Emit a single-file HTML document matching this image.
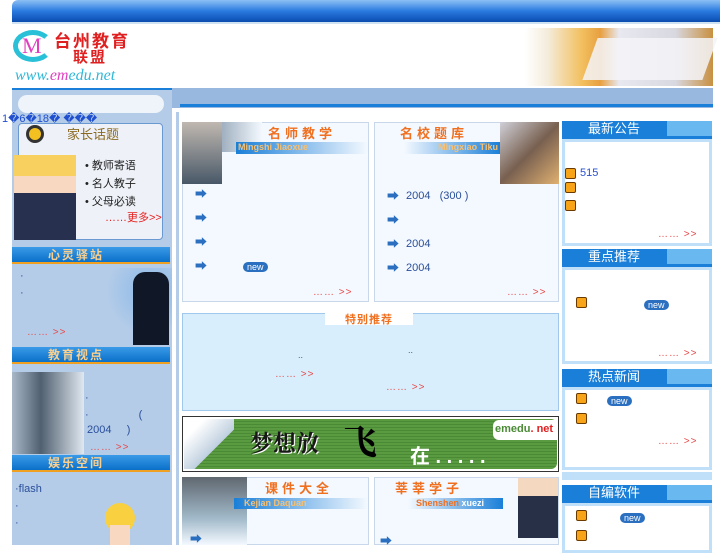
<!DOCTYPE html>
<html><head><meta charset="utf-8"><style>
*{margin:0;padding:0;box-sizing:border-box}
body{width:727px;height:545px;overflow:hidden;background:#fff;font-family:"Liberation Sans","Noto Sans CJK SC",sans-serif;font-size:11px;position:relative}
.a{position:absolute;white-space:nowrap}
.arrow{color:#2a6fc0;font-size:12px;font-weight:bold}
.more{color:#e84a4a;font-size:10px;letter-spacing:1px}
.blue{color:#2a4f9a;font-size:11px}
.sun{width:11px;height:11px;background:#f7a418;border:1px solid #6a3a00;border-radius:2px}
.new{background:#2a6fc0;color:#fff;font-size:9px;border-radius:6px;padding:0 4px;line-height:10px}
.rh{background:linear-gradient(90deg,#1a7fd8 70%,#6ab8f0 70%);color:#fff;font-size:13px;height:15px;line-height:15px;padding-left:26px;border-bottom:3px solid #1a7fd8;height:18px}
.rb{background:#fff;border:3px solid #bfe0f8}
.lbar{height:17px;background:linear-gradient(#3a9ae8,#0a70c8);border-bottom:2px solid #f0a020;color:#f9d090;font-weight:bold;font-size:12px;line-height:16px;padding-left:36px;letter-spacing:2px}
.panel{background:#f4f9ff;border:1px solid #c8d8ea}
</style></head><body>
<div class="a" style="left:12px;top:0;width:708px;height:22px;background:linear-gradient(#8cc0f4,#2a7ae0 50%,#0a4cb0);border-radius:6px 0 0 0"></div>
<div class="a" style="left:12px;top:22px;width:708px;height:2px;background:#cfe2f4"></div>
<div class="a" style="left:13px;top:30px;width:40px;height:32px;border-radius:50%;border:5px solid #2ac0d8;border-right-color:transparent"></div>
<div class="a" style="left:22px;top:33px;color:#e040c0;font-size:22px;font-family:'Liberation Serif',serif">M</div>
<div class="a" style="left:54px;top:27px;color:#e02020;font-size:17px;font-weight:bold;letter-spacing:2px">台州教育</div>
<div class="a" style="left:73px;top:46px;color:#e02020;font-size:15px;font-weight:bold;letter-spacing:2px">联盟</div>
<div class="a" style="left:15px;top:67px;color:#30b8d8;font-size:16px;font-style:italic;font-family:'Liberation Serif',serif">www.<span style="color:#e040c0">em</span>edu.net</div>
<div class="a" style="left:525px;top:28px;width:188px;height:58px;background:linear-gradient(90deg,#fff,#f4ecdc 12%,#f2c060 30%,#e8a040 40%,#e8e8f0 50%,#d8d8e0 80%,#c89040)"></div>
<div class="a" style="left:590px;top:38px;width:120px;height:42px;background:#f4f4f8;transform:skewX(-20deg);opacity:.85"></div>
<div class="a" style="left:12px;top:88px;width:701px;height:20px;background:#98b8e0"></div>
<div class="a" style="left:180px;top:104px;width:533px;height:3px;background:#1a7fd8"></div>
<div class="a" style="left:12px;top:88px;width:160px;height:457px;background:#b4cce8"></div>
<div class="a" style="left:12px;top:88px;width:160px;height:2px;background:#1a7fd8"></div>
<div class="a" style="left:18px;top:95px;width:146px;height:18px;background:#eef4fa;border-radius:9px"></div>
<div class="a" style="left:172px;top:108px;width:10px;height:437px;background:#fff"></div>
<div class="a" style="left:176px;top:112px;width:3px;height:433px;background:#b4cce8"></div>
<div class="a" style="left:2px;top:112px;color:#2050d0;font-size:11px">1�6�18� ���</div>
<div class="a" style="left:18px;top:123px;width:145px;height:117px;background:#eef2f8;border:1px solid #6a98d0;border-radius:4px"></div>
<div class="a" style="left:26px;top:125px;width:18px;height:18px;border-radius:50%;background:#f2c020;border:3px solid #333"></div>
<div class="a" style="left:67px;top:124px;font-size:13px;color:#8a6a20">家长话题</div>
<div class="a" style="left:14px;top:155px;width:62px;height:85px;background:linear-gradient(#f8d060 0,#f8d060 25%,#f8d8c0 25%,#f8d8c0 45%,#283050 45%)"></div>
<div class="a" style="left:85px;top:157px;font-size:11px;line-height:18px;color:#222">• 教师寄语<br>• 名人教子<br>• 父母必读</div>
<div class="a" style="left:105px;top:209px;font-size:11px;color:#e82020">……更多>></div>
<div class="a lbar" style="left:12px;top:247px;width:158px">心灵驿站</div>
<div class="a" style="left:100px;top:268px;width:72px;height:77px;background:radial-gradient(circle at 70% 30%,#8ab8e8,#b4cce8 60%)"></div>
<div class="a" style="left:133px;top:272px;width:36px;height:73px;background:#101828;border-radius:12px 12px 0 0"></div>
<div class="a" style="left:20px;top:268px;color:#2a4f9a;line-height:17px">·<br>·</div>
<div class="a more" style="left:27px;top:327px">…… >></div>
<div class="a lbar" style="left:12px;top:347px;width:158px">教育视点</div>
<div class="a" style="left:12px;top:372px;width:72px;height:82px;background:linear-gradient(90deg,#a8b8c8,#506070 40%,#e0e8f0)"></div>
<div class="a" style="left:85px;top:390px;color:#2a4f9a;line-height:17px">·<br>·<span style="margin-left:50px">(</span></div>
<div class="a blue" style="left:87px;top:424px">2004 &nbsp; &nbsp; )</div>
<div class="a more" style="left:90px;top:442px">…… >></div>
<div class="a lbar" style="left:12px;top:455px;width:158px">娱乐空间</div>
<div class="a" style="left:15px;top:481px;color:#2a4f9a;font-size:11px;line-height:17px">·flash<br>·<br>·</div>
<div class="a" style="left:105px;top:503px;width:30px;height:30px;border-radius:50%;background:#f8d040"></div>
<div class="a" style="left:110px;top:525px;width:20px;height:20px;background:#f8d8c0"></div>
<div class="a panel" style="left:182px;top:122px;width:187px;height:180px"></div>
<div class="a" style="left:182px;top:122px;width:40px;height:62px;background:linear-gradient(#c0b8b0,#485868)"></div>
<div class="a" style="left:222px;top:122px;width:40px;height:30px;background:linear-gradient(90deg,#a0b0c0,#f4f9ff)"></div>
<div class="a" style="left:268px;top:123px;color:#f07020;font-size:13px;font-weight:bold;letter-spacing:4px">名师教学</div>
<div class="a" style="left:236px;top:142px;width:132px;height:12px;background:linear-gradient(90deg,#1a7fd8,#f4f9ff);color:#f8c070;font-size:9px;font-weight:bold;padding-left:2px">Mingshi Jiaoxue</div>
<div class="a arrow" style="left:195px;top:185px">➡</div>
<div class="a arrow" style="left:195px;top:209px">➡</div>
<div class="a arrow" style="left:195px;top:233px">➡</div>
<div class="a arrow" style="left:195px;top:257px">➡</div>
<div class="a new" style="left:243px;top:262px">new</div>
<div class="a more" style="left:313px;top:287px">…… >></div>
<div class="a panel" style="left:374px;top:122px;width:185px;height:180px"></div>
<div class="a" style="left:400px;top:123px;color:#f07020;font-size:13px;font-weight:bold;letter-spacing:4px">名校题库</div>
<div class="a" style="left:404px;top:142px;width:96px;height:12px;background:linear-gradient(90deg,#f4f9ff,#1a7fd8);color:#f8c070;font-size:9px;font-weight:bold;text-align:right;padding-right:2px">Mingxiao Tiku</div>
<div class="a" style="left:500px;top:122px;width:59px;height:62px;background:linear-gradient(135deg,#d0d0d8,#786050 50%,#e0b070)"></div>
<div class="a arrow" style="left:387px;top:187px">➡</div><div class="a blue" style="left:406px;top:190px">2004 &nbsp; (300 )</div>
<div class="a arrow" style="left:387px;top:211px">➡</div>
<div class="a arrow" style="left:387px;top:235px">➡</div><div class="a blue" style="left:406px;top:238px">2004</div>
<div class="a arrow" style="left:387px;top:259px">➡</div><div class="a blue" style="left:406px;top:262px">2004</div>
<div class="a more" style="left:507px;top:287px">…… >></div>
<div class="a" style="left:182px;top:313px;width:377px;height:98px;background:#d8eefc;border:1px solid #a0c8ec"></div>
<div class="a" style="left:325px;top:312px;width:88px;height:13px;background:#fff"></div>
<div class="a" style="left:345px;top:311px;color:#f07020;font-size:11px;font-weight:bold;letter-spacing:1px">特别推荐</div>
<div class="a" style="left:298px;top:350px;font-size:9px;color:#555">..</div>
<div class="a" style="left:408px;top:345px;font-size:9px;color:#555">..</div>
<div class="a more" style="left:275px;top:369px">…… >></div>
<div class="a more" style="left:386px;top:382px">…… >></div>
<div class="a" style="left:182px;top:416px;width:377px;height:56px;background:#fff;border:1px solid #333"></div>
<div class="a" style="left:184px;top:419px;width:373px;height:50px;background:repeating-linear-gradient(#5a9a40 0,#5a9a40 2px,#4a8a34 2px,#4a8a34 3px);border-radius:0 6px 6px 0"></div>
<div class="a" style="left:184px;top:419px;width:50px;height:50px;background:linear-gradient(135deg,#fff 20%,#c0d0e0 60%,transparent 61%)"></div>
<div class="a" style="left:250px;top:425px;color:#181818;font-size:23px;font-weight:bold;font-family:'Liberation Serif','Noto Serif CJK SC',serif;text-shadow:1px 1px 0 #fff">梦想放</div>
<div class="a" style="left:343px;top:415px;color:#000;font-size:34px;font-weight:bold;font-family:'Noto Serif CJK SC',serif">飞</div>
<div class="a" style="left:410px;top:440px;color:#fff;font-size:20px;font-weight:bold">在 . . . . .</div>
<div class="a" style="left:493px;top:420px;width:64px;height:20px;background:#fff;border-radius:6px 0 0 6px;color:#4a8a34;font-weight:bold;font-size:11px;padding:3px 0 0 2px">emedu<span style="color:#e02020">. net</span></div>
<div class="a panel" style="left:182px;top:477px;width:187px;height:68px"></div>
<div class="a" style="left:182px;top:477px;width:65px;height:68px;background:linear-gradient(#606870,#a0b8c8 60%,#f4f9ff)"></div>
<div class="a" style="left:265px;top:478px;color:#f07020;font-size:13px;font-weight:bold;letter-spacing:4px">课件大全</div>
<div class="a" style="left:234px;top:498px;width:134px;height:11px;background:linear-gradient(90deg,#1a7fd8,#f4f9ff);color:#f8c070;font-size:9px;font-weight:bold;padding-left:10px">Kejian Daquan</div>
<div class="a arrow" style="left:190px;top:530px">➡</div>
<div class="a panel" style="left:374px;top:477px;width:185px;height:68px"></div>
<div class="a" style="left:395px;top:478px;color:#f07020;font-size:13px;font-weight:bold;letter-spacing:4px">莘莘学子</div>
<div class="a" style="left:408px;top:498px;width:95px;height:11px;background:linear-gradient(90deg,#f4f9ff,#1a7fd8);color:#f07020;font-size:9px;font-weight:bold;padding-left:8px">Shenshen <span style="color:#fff">xuezi</span></div>
<div class="a" style="left:518px;top:478px;width:40px;height:60px;background:linear-gradient(#f4d8c0 0,#f4d8c0 30%,#283048 30%)"></div>
<div class="a arrow" style="left:380px;top:532px">➡</div>
<div class="a" style="left:560px;top:112px;width:155px;height:433px;background:#fff"></div>
<div class="a rh" style="left:562px;top:121px;width:150px">最新公告</div>
<div class="a rb" style="left:562px;top:139px;width:150px;height:107px"></div>
<div class="a sun" style="left:565px;top:168px"></div><div class="a" style="left:580px;top:167px;color:#2a4fd0;font-size:11px">515</div>
<div class="a sun" style="left:565px;top:182px"></div>
<div class="a sun" style="left:565px;top:200px"></div>
<div class="a more" style="left:658px;top:229px">…… >></div>
<div class="a rh" style="left:562px;top:249px;width:150px">重点推荐</div>
<div class="a rb" style="left:562px;top:267px;width:150px;height:97px"></div>
<div class="a sun" style="left:576px;top:297px"></div>
<div class="a new" style="left:644px;top:300px">new</div>
<div class="a more" style="left:658px;top:348px">…… >></div>
<div class="a rh" style="left:562px;top:369px;width:150px">热点新闻</div>
<div class="a rb" style="left:562px;top:387px;width:150px;height:83px"></div>
<div class="a sun" style="left:576px;top:393px"></div><div class="a new" style="left:607px;top:396px">new</div>
<div class="a sun" style="left:576px;top:413px"></div>
<div class="a more" style="left:658px;top:436px">…… >></div>
<div class="a" style="left:562px;top:472px;width:150px;height:8px;background:#bfe0f8"></div>
<div class="a rh" style="left:562px;top:485px;width:150px">自编软件</div>
<div class="a rb" style="left:562px;top:503px;width:150px;height:50px"></div>
<div class="a sun" style="left:576px;top:510px"></div><div class="a new" style="left:620px;top:513px">new</div>
<div class="a sun" style="left:576px;top:530px"></div>
</body></html>
